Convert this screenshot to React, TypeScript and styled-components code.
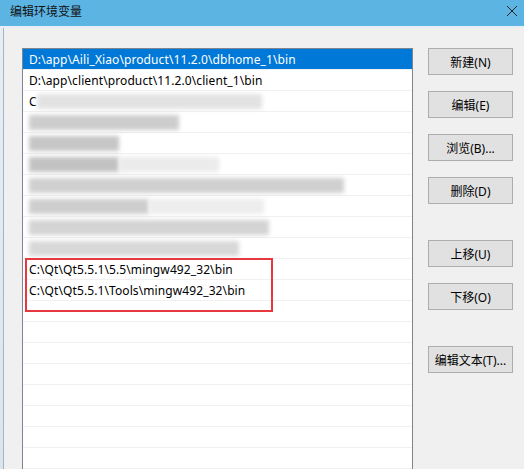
import React from 'react';
import styled, { createGlobalStyle } from 'styled-components';

const GlobalStyle = createGlobalStyle`
	html, body {
		margin: 0;
		padding: 0;
		background: #f0f0f0;
	}
	#root {
		height: 469px;
		overflow: hidden;
	}
`;

const uiFont = `"Microsoft YaHei", "Noto Sans", "Noto Sans CJK SC", sans-serif`;

interface PathRow {
	text?: string;
	smudges?: Array<Smudge>;
}

interface Smudge {
	width: number;
	tone: string;
}

const rows: Array<PathRow> = [
	{ text: 'D:\\app\\Aili_Xiao\\product\\11.2.0\\dbhome_1\\bin' },
	{ text: 'D:\\app\\client\\product\\11.2.0\\client_1\\bin' },
	{ text: 'C', smudges: [{ width: 225, tone: '#e2e2e2' }] },
	{ smudges: [{ width: 150, tone: '#cdcdcd' }] },
	{ smudges: [{ width: 90, tone: '#c6c6c6' }] },
	{ smudges: [{ width: 90, tone: '#c2c2c2' }, { width: 100, tone: '#ebebeb' }] },
	{ smudges: [{ width: 315, tone: '#d0d0d0' }] },
	{ smudges: [{ width: 120, tone: '#cecece' }, { width: 115, tone: '#ededed' }] },
	{ smudges: [{ width: 240, tone: '#d4d4d4' }] },
	{ smudges: [{ width: 210, tone: '#d8d8d8' }] },
	{ text: 'C:\\Qt\\Qt5.5.1\\5.5\\mingw492_32\\bin' },
	{ text: 'C:\\Qt\\Qt5.5.1\\Tools\\mingw492_32\\bin' },
	{},
	{},
	{},
	{},
	{},
	{},
	{},
	{}
];

const Frame = styled.div`
	display: flex;
	flex-direction: column;
	height: 469px;
	font-family: ${uiFont};
	font-size: 12px;
	color: #000;
`;

const TitleBar = styled.div`
	height: 26px;
	flex: none;
	display: flex;
	align-items: center;
	justify-content: space-between;
	padding: 0 6px 0 10px;
	background: #5cb4e3;
	border-bottom: 2px solid #e8eef3;
`;

const Title = styled.span`
	font-size: 12px;
	line-height: 1;
	color: #111;
	margin-top: -3px;
`;

const CloseGlyph = styled.svg`
	display: block;
	margin-top: -4px;
`;

const Body = styled.div`
	flex: 1;
	display: flex;
	min-height: 0;
`;

const BackStrip = styled.div`
	width: 3px;
	flex: none;
	background: linear-gradient(#e6eef5, #d9e5ef);
	border-right: 1px solid #aab2ba;
`;

const Content = styled.div`
	flex: 1;
	display: flex;
	gap: 15px;
	padding: 20px 11px 0 18px;
	min-height: 0;
`;

const ListBox = styled.div`
	position: relative;
	width: 389px;
	flex: none;
	display: flex;
	flex-direction: column;
	background: #fff;
	border: 1px solid #7f8590;
	border-bottom: none;
	overflow: hidden;
`;

const Row = styled.div<{ $selected?: boolean }>`
	height: 20px;
	flex: none;
	display: flex;
	align-items: center;
	padding-left: 6px;
	white-space: nowrap;
	letter-spacing: 0.1px;
	border-bottom: 1px solid #f1f1f1;
	background: ${(p) => (p.$selected ? '#0078d7' : '#fff')};
	color: ${(p) => (p.$selected ? '#fff' : '#000')};
`;

const Blur = styled.span<{ $tone: string }>`
	display: block;
	height: 15px;
	background: ${(p) => p.$tone};
	filter: blur(2px);
`;

const Highlight = styled.div`
	position: absolute;
	left: 2px;
	top: 209px;
	width: 244px;
	height: 50px;
	border: 2px solid #e6393f;
	pointer-events: none;
`;

const ButtonColumn = styled.div`
	display: flex;
	flex-direction: column;
	gap: 16px;
`;

const Button = styled.button<{ $spaced?: boolean }>`
	width: 85px;
	height: 27px;
	margin-top: ${(p) => (p.$spaced ? '20px' : '0')};
	padding: 0;
	font-family: ${uiFont};
	font-size: 12px;
	color: #000;
	background: #e1e1e1;
	border: 1px solid #adadad;
	border-radius: 0;
`;

const buttons = [
	{ label: '新建(N)' },
	{ label: '编辑(E)' },
	{ label: '浏览(B)...' },
	{ label: '删除(D)' },
	{ label: '上移(U)', spaced: true },
	{ label: '下移(O)' },
	{ label: '编辑文本(T)...', spaced: true }
];

export default function App() {
	return (
		<Frame>
			<GlobalStyle />
			<TitleBar>
				<Title>编辑环境变量</Title>
				<CloseGlyph width="12" height="12" viewBox="0 0 12 12">
					<path d="M1 1 L11 11 M11 1 L1 11" stroke="#222" strokeWidth="1" fill="none" />
				</CloseGlyph>
			</TitleBar>
			<Body>
				<BackStrip />
				<Content>
					<ListBox>
						{rows.map((row, index) => (
							<Row key={index} $selected={index === 0}>
								{row.text}
								{row.smudges?.map((s, i) => (
									<Blur key={i} $tone={s.tone} style={{ width: s.width }} />
								))}
							</Row>
						))}
						<Highlight />
					</ListBox>
					<ButtonColumn>
						{buttons.map((b) => (
							<Button key={b.label} $spaced={b.spaced}>
								{b.label}
							</Button>
						))}
					</ButtonColumn>
				</Content>
			</Body>
		</Frame>
	);
}
